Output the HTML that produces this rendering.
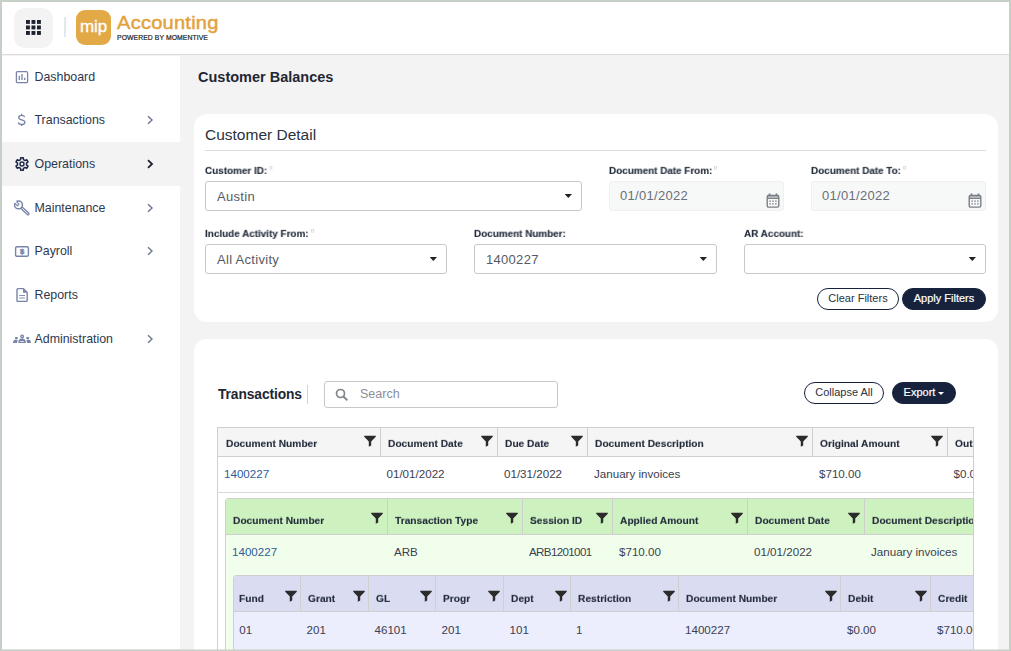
<!DOCTYPE html>
<html lang="en">
<head>
<meta charset="utf-8">
<title>Customer Balances</title>
<style>
*{box-sizing:border-box;margin:0;padding:0}
html,body{width:1011px;height:651px;overflow:hidden;background:#c7cfc9;font-family:"Liberation Sans",sans-serif;color:#222b3a}
#app{position:absolute;left:2px;top:2px;width:1007px;height:648px;background:#f3f3f3;overflow:hidden}
#hdr{position:absolute;left:0;top:0;width:1007px;height:53px;background:#fff;border-bottom:1px solid #dcdcdc}
#gridbtn{position:absolute;left:12px;top:6px;width:39px;height:40px;border-radius:11px;background:#f3f3f3}
#gridbtn svg{position:absolute;left:12px;top:12px}
#hdiv{position:absolute;left:62px;top:15px;width:2px;height:20px;background:#e4e8ee}
#mip{position:absolute;left:74px;top:8px;width:35px;height:35px;border-radius:9px;background:#e3a947;color:#fff;font-size:17px;line-height:33px;text-align:center;letter-spacing:-0.2px;-webkit-text-stroke:0.3px #fff}
#acct{position:absolute;left:115px;top:9px;font-size:17.8px;line-height:24px;color:#e3a23c;letter-spacing:0.2px;-webkit-text-stroke:0.45px #e3a23c;transform:scaleX(1.13);transform-origin:0 0;white-space:nowrap}
#pow{position:absolute;left:115px;top:31px;font-size:6.8px;line-height:9px;color:#222;letter-spacing:0.1px;-webkit-text-stroke:0.2px #222;white-space:nowrap}
#side{position:absolute;left:0;top:54px;width:178px;height:593px;background:#fff}
.nav{position:absolute;left:0;width:178px;height:44px;font-size:12.4px;line-height:44px;color:#2d3850}
.nav.on{background:none}
#navhl{position:absolute;left:0;top:86px;width:178px;height:44px;background:#f3f3f3}
.nav span{position:absolute;left:32.5px;top:-1px}
.nav svg.ic{position:absolute}
.nav svg.ch{position:absolute;left:144px;top:16px}
#main{position:absolute;left:178px;top:54px;width:829px;height:593px}
h1{position:absolute;left:18px;top:11px;font-size:14.5px;line-height:20px;font-weight:bold;color:#1f2633}
.card{position:absolute;left:14px;width:804px;background:#fff;border-radius:13px}
.ttl{position:absolute;left:11px;top:10.9px;font-size:14.7px;line-height:20px;color:#2a3140;transform:scaleX(1.055);transform-origin:0 0;white-space:nowrap}
.hr{position:absolute;left:11px;top:36px;width:781px;height:1px;background:#dcdcdc}
.lbl{position:absolute;font-size:10px;line-height:14px;margin:0;font-weight:bold;color:#222b3a;white-space:nowrap;-webkit-text-stroke:0.1px #222b3a;transform:scale(0.99,0.9);transform-origin:0 10.3px;will-change:transform}
.lbl i{display:inline-block;width:3px;height:4px;border:1px solid #dcdcdc;position:relative;top:-5px;left:2px}
.inp{position:absolute;height:30px;border:1px solid #c8c8c8;border-radius:3px;background:#fff;font-size:13px;line-height:29px;color:#555b66;padding-left:11px;letter-spacing:0.3px}
.inp.dis{background:#f7f8f8;border-color:#efefef;color:#6a6f78;line-height:27px;padding-left:10px}
.inp b{position:absolute;right:9px;top:12px;width:7.4px;height:4px;background:#222;clip-path:polygon(0 0,100% 0,50% 100%)}
.inp svg{position:absolute;right:3px;top:10.5px}
.btn{position:absolute;height:22px;border-radius:11px;border:1px solid #17233d;font-size:11px;line-height:19px;text-align:center;color:#2a3140;background:#fff;white-space:nowrap}
.btn.pri{background:#17233d;color:#fff;-webkit-text-stroke:0.2px #fff}
#tt{position:absolute;font-size:13.8px;line-height:20px;font-weight:bold;color:#1f2633;letter-spacing:-0.1px}
#tdv{position:absolute;width:1px;height:19px;background:#d4d4d4}
#srch{position:absolute;border:1px solid #c8c8c8;border-radius:3px;font-size:12.5px;line-height:25px;color:#8a8f98;padding-left:35px}
#srch svg{position:absolute;left:10px;top:6px}
.abs{position:absolute}
.th{position:absolute;font-size:10px;font-weight:bold;color:#222b3a;white-space:nowrap;line-height:12px;margin-top:0.1px;-webkit-text-stroke:0.1px #222b3a;transform:scale(1.02,0.9);transform-origin:0 9.3px;will-change:transform}
.td{position:absolute;font-size:11.6px;line-height:14px;color:#3a4150;white-space:nowrap}
.td.lk{color:#2c5c9a}
.vl{position:absolute;width:1px;background:#cfcfcf}
.hl{position:absolute;height:1px;background:#cfcfcf}
svg.f{position:absolute}
</style>
</head>
<body>
<div id="app">
<div id="hdr">
<div id="gridbtn"><svg width="15" height="15" viewBox="0 0 15 15"><g fill="#1e2230"><rect x="0" y="0" width="3.9" height="3.9"/><rect x="5.5" y="0" width="3.9" height="3.9"/><rect x="11" y="0" width="3.9" height="3.9"/><rect x="0" y="5.5" width="3.9" height="3.9"/><rect x="5.5" y="5.5" width="3.9" height="3.9"/><rect x="11" y="5.5" width="3.9" height="3.9"/><rect x="0" y="11" width="3.9" height="3.9"/><rect x="5.5" y="11" width="3.9" height="3.9"/><rect x="11" y="11" width="3.9" height="3.9"/></g></svg></div>
<div id="hdiv"></div><div id="mip">mip</div><div id="acct">Accounting</div><div id="pow">POWERED BY MOMENTIVE</div></div>
<div id="side"><div id="navhl"></div>
<div class="nav" style="top:0px"><svg class="ic" style="left:13px;top:14px" width="14" height="14" viewBox="0 0 14 14"><rect x="1.4" y="1.6" width="11.2" height="11" rx="1.2" fill="none" stroke="#7884a8" stroke-width="1.3"/><path d="M4.3 5.8V10 M7 3.9V10 M9.7 7.8V10" stroke="#7884a8" stroke-width="1.3" fill="none"/></svg><span>Dashboard</span></div>
<div class="nav" style="top:43px"><svg class="ic" style="left:14px;top:13px" width="11" height="16" viewBox="0 0 11 16"><path d="M8.6 5.2C8.3 3.9 7.1 3.3 5.6 3.3C3.9 3.3 2.7 4.2 2.7 5.5C2.7 8.6 8.9 7 8.9 10.2C8.9 11.6 7.5 12.5 5.7 12.5C3.9 12.5 2.6 11.7 2.3 10.3 M5.6 1.8V3.3 M5.6 12.5V14" fill="none" stroke="#7884a8" stroke-width="1.3"/></svg><span>Transactions</span><svg class="ch" width="8" height="10" viewBox="0 0 8 10"><path d="M2 1.2L6 5L2 8.8" fill="none" stroke="#6b7690" stroke-width="1.4"/></svg></div>
<div class="nav on" style="top:87px"><svg class="ic" style="left:12px;top:13px" width="16" height="16" viewBox="0 0 16 16"><path d="M6.53 3.64 L6.80 1.71 L9.20 1.71 L9.47 3.64 L11.04 4.55 L12.84 3.82 L14.04 5.90 L12.51 7.09 L12.51 8.91 L14.04 10.10 L12.84 12.18 L11.04 11.45 L9.47 12.36 L9.20 14.29 L6.80 14.29 L6.53 12.36 L4.96 11.45 L3.16 12.18 L1.96 10.10 L3.49 8.91 L3.49 7.09 L1.96 5.90 L3.16 3.82 L4.96 4.55Z" fill="none" stroke="#1c2745" stroke-width="1.5" stroke-linejoin="round"/><circle cx="8" cy="8" r="2" fill="none" stroke="#1c2745" stroke-width="1.4"/></svg><span>Operations</span><svg class="ch" width="8" height="10" viewBox="0 0 8 10"><path d="M2 1.2L6 5L2 8.8" fill="none" stroke="#1e2230" stroke-width="1.8"/></svg></div>
<div class="nav" style="top:131px"><svg class="ic" style="left:11px;top:13px" width="18" height="18" viewBox="0 0 18 18"><path d="M8.4 7.6L15 13.8" stroke="#7884a8" stroke-width="3.3" stroke-linecap="round" fill="none"/><path d="M8.6 7.8L14.9 13.7" stroke="#fff" stroke-width="0.9" stroke-linecap="round" fill="none"/><circle cx="5.5" cy="4.9" r="3.9" fill="#fff" stroke="#7884a8" stroke-width="1.5"/><path d="M1.6 1.2L5.6 5.2" stroke="#fff" stroke-width="2.4" fill="none"/><path d="M3.4 1.6L6 4.2L4.6 5.8L1.9 3.2" fill="none" stroke="#7884a8" stroke-width="1.1" stroke-linejoin="round"/></svg><span>Maintenance</span><svg class="ch" width="8" height="10" viewBox="0 0 8 10"><path d="M2 1.2L6 5L2 8.8" fill="none" stroke="#6b7690" stroke-width="1.4"/></svg></div>
<div class="nav" style="top:174px"><svg class="ic" style="left:12px;top:15px" width="16" height="13" viewBox="0 0 16 13"><rect x="1.6" y="1.7" width="12.8" height="9.6" rx="1.4" fill="none" stroke="#7884a8" stroke-width="1.4"/><text x="8" y="9.4" font-family="Liberation Sans, sans-serif" font-size="7.5" font-weight="bold" fill="#7884a8" stroke="#7884a8" stroke-width="0.5" text-anchor="middle">$</text></svg><span>Payroll</span><svg class="ch" width="8" height="10" viewBox="0 0 8 10"><path d="M2 1.2L6 5L2 8.8" fill="none" stroke="#6b7690" stroke-width="1.4"/></svg></div>
<div class="nav" style="top:218px"><svg class="ic" style="left:13px;top:13px" width="14" height="16" viewBox="0 0 14 16"><path d="M2 2.6Q2 1.6 3 1.6H8.2L12.2 5.6V13.4Q12.2 14.4 11.2 14.4H3Q2 14.4 2 13.4Z" fill="none" stroke="#7884a8" stroke-width="1.4" stroke-linejoin="round"/><path d="M8 1.6V5.8H12.2Z" fill="#7884a8"/><path d="M4.2 8.5H10 M4.2 11H10" stroke="#7884a8" stroke-width="0.9"/></svg><span>Reports</span></div>
<div class="nav" style="top:262px"><svg class="ic" style="left:10px;top:15px" width="20" height="12" viewBox="0 0 20 12"><circle cx="10.1" cy="3.5" r="1.35" fill="#dfe3ee" stroke="#7884a8" stroke-width="1.3"/><path d="M6.3 9.9Q6.3 5.6 10.1 5.6Q13.9 5.6 13.9 9.9Z" fill="#7884a8"/><rect x="8" y="7.9" width="4.2" height="0.8" rx="0.4" fill="#fff"/><rect x="2.9" y="4" width="3" height="2" rx="0.8" fill="#7884a8"/><rect x="14.2" y="4" width="3" height="2" rx="0.8" fill="#7884a8"/><path d="M1.1 9.9Q1.3 6.6 4.2 6.6Q5.2 6.6 5.7 7.2Q5.1 8.4 5.1 9.9Z" fill="#7884a8"/><path d="M19 9.9Q18.8 6.6 15.9 6.6Q14.9 6.6 14.4 7.2Q15 8.4 15 9.9Z" fill="#7884a8"/></svg><span>Administration</span><svg class="ch" width="8" height="10" viewBox="0 0 8 10"><path d="M2 1.2L6 5L2 8.8" fill="none" stroke="#6b7690" stroke-width="1.4"/></svg></div>
</div>
<div id="main"><h1>Customer Balances</h1>
<div class="card" id="c1" style="top:58px;height:208px">
<div class="ttl">Customer Detail</div><div class="hr"></div>
<div class="lbl" style="left:11px;top:50px">Customer ID:<i></i></div>
<div class="inp" style="left:11px;top:67px;width:377px">Austin<b></b></div>
<div class="lbl" style="left:415px;top:50px">Document Date From:<i></i></div>
<div class="inp dis" style="left:415px;top:67px;width:175px">01/01/2022<svg width="14" height="15" viewBox="0 0 14 15"><rect x="1.2" y="2.5" width="11.6" height="11.6" rx="1.4" fill="none" stroke="#7a7f85" stroke-width="1.4"/><path d="M1.2 2.6h11.6v1H1.2z M1.2 4.5h11.6v1.5H1.2z M2.6 0.4h1.8v2.4H2.6z M9.6 0.4h1.8v2.4H9.6z" fill="#7a7f85"/><g fill="#6a6f75"><rect x="3.3" y="7.6" width="1.7" height="1"/><rect x="6.15" y="7.6" width="1.7" height="1"/><rect x="9" y="7.6" width="1.7" height="1"/><rect x="3.3" y="10.4" width="1.7" height="1"/><rect x="6.15" y="10.4" width="1.7" height="1"/><rect x="9" y="10.4" width="1.7" height="1"/></g></svg></div>
<div class="lbl" style="left:617px;top:50px">Document Date To:<i></i></div>
<div class="inp dis" style="left:617px;top:67px;width:175px">01/01/2022<svg width="14" height="15" viewBox="0 0 14 15"><rect x="1.2" y="2.5" width="11.6" height="11.6" rx="1.4" fill="none" stroke="#7a7f85" stroke-width="1.4"/><path d="M1.2 2.6h11.6v1H1.2z M1.2 4.5h11.6v1.5H1.2z M2.6 0.4h1.8v2.4H2.6z M9.6 0.4h1.8v2.4H9.6z" fill="#7a7f85"/><g fill="#6a6f75"><rect x="3.3" y="7.6" width="1.7" height="1"/><rect x="6.15" y="7.6" width="1.7" height="1"/><rect x="9" y="7.6" width="1.7" height="1"/><rect x="3.3" y="10.4" width="1.7" height="1"/><rect x="6.15" y="10.4" width="1.7" height="1"/><rect x="9" y="10.4" width="1.7" height="1"/></g></svg></div>
<div class="lbl" style="left:11px;top:113px">Include Activity From:<i></i></div>
<div class="inp" style="left:11px;top:130px;width:242px">All Activity<b></b></div>
<div class="lbl" style="left:280px;top:113px">Document Number:</div>
<div class="inp" style="left:280px;top:130px;width:243px">1400227<b></b></div>
<div class="lbl" style="left:550px;top:113px">AR Account:</div>
<div class="inp" style="left:550px;top:130px;width:242px"><b></b></div>
<div class="btn" style="left:623px;top:174px;width:82px">Clear Filters</div>
<div class="btn pri" style="left:708px;top:174px;width:84px">Apply Filters</div>
</div>
<div class="card" id="c2" style="top:283px;height:330px;border-bottom-left-radius:0;border-bottom-right-radius:0;overflow:hidden">
<div id="tt" style="left:24px;top:45.5px">Transactions</div>
<div id="tdv" style="left:113px;top:46px"></div>
<div id="srch" style="left:130px;top:42px;width:234px;height:27px"><svg width="14" height="14" viewBox="0 0 14 14"><circle cx="5.5" cy="5.5" r="4" fill="none" stroke="#808489" stroke-width="1.7"/><path d="M8.5 8.5L12.3 12.3" stroke="#808489" stroke-width="1.9"/></svg>Search</div>
<div class="btn" style="left:610px;top:43px;width:80px">Collapse All</div>
<div class="btn pri" style="left:698px;top:43px;width:64px">Export <span style="display:inline-block;width:0;height:0;border-left:3px solid transparent;border-right:3px solid transparent;border-top:3px solid #fff;vertical-align:1px"></span></div>
<div class="abs" style="left:23px;top:88px;width:757px;height:230px;overflow:hidden;background:#fff">
<div class="abs" style="left:0px;top:0px;width:983px;height:30px;background:#f5f5f5;"></div>
<div class="hl" style="left:0px;top:0px;width:983px;background:#cfcfcf"></div>
<div class="hl" style="left:0px;top:29px;width:983px;background:#cfcfcf"></div>
<div class="vl" style="left:0px;top:0px;height:273px;background:#cfcfcf"></div>
<div class="th" style="left:9px;top:11px">Document Number</div>
<div class="vl" style="left:163px;top:0px;height:30px;background:#cfcfcf"></div>
<div class="th" style="left:171px;top:11px">Document Date</div>
<svg class="f" style="left:147.39999999999998px;top:8px" width="12" height="12" viewBox="0 0 11 11"><path d="M0.2 0.6h10.6v0.9L6.6 6V9.6L4.4 10.8V6L0.2 1.5z" fill="#2b2b2b"/></svg>
<div class="vl" style="left:280px;top:0px;height:30px;background:#cfcfcf"></div>
<div class="th" style="left:288px;top:11px">Due Date</div>
<svg class="f" style="left:264.4px;top:8px" width="12" height="12" viewBox="0 0 11 11"><path d="M0.2 0.6h10.6v0.9L6.6 6V9.6L4.4 10.8V6L0.2 1.5z" fill="#2b2b2b"/></svg>
<div class="vl" style="left:370px;top:0px;height:30px;background:#cfcfcf"></div>
<div class="th" style="left:378px;top:11px">Document Description</div>
<svg class="f" style="left:354.4px;top:8px" width="12" height="12" viewBox="0 0 11 11"><path d="M0.2 0.6h10.6v0.9L6.6 6V9.6L4.4 10.8V6L0.2 1.5z" fill="#2b2b2b"/></svg>
<div class="vl" style="left:595px;top:0px;height:30px;background:#cfcfcf"></div>
<div class="th" style="left:603px;top:11px">Original Amount</div>
<svg class="f" style="left:579.4px;top:8px" width="12" height="12" viewBox="0 0 11 11"><path d="M0.2 0.6h10.6v0.9L6.6 6V9.6L4.4 10.8V6L0.2 1.5z" fill="#2b2b2b"/></svg>
<div class="vl" style="left:730px;top:0px;height:30px;background:#cfcfcf"></div>
<div class="th" style="left:738px;top:11px">Outstanding</div>
<svg class="f" style="left:714.4px;top:8px" width="12" height="12" viewBox="0 0 11 11"><path d="M0.2 0.6h10.6v0.9L6.6 6V9.6L4.4 10.8V6L0.2 1.5z" fill="#2b2b2b"/></svg>
<div class="td lk" style="left:7px;top:40px">1400227</div>
<div class="td" style="left:169.5px;top:40px">01/01/2022</div>
<div class="td" style="left:287px;top:40px">01/31/2022</div>
<div class="td" style="left:377px;top:40px">January invoices</div>
<div class="td" style="left:602px;top:40px">$710.00</div>
<div class="td" style="left:736.5px;top:40px">$0.00</div>
<div class="hl" style="left:0px;top:65px;width:983px;background:#d9d9d9"></div>
<div class="abs" style="left:8px;top:71px;width:1000px;height:300px;background:#f2feec;border:1px solid #cfcfcf;border-top-left-radius:3px"></div>
<div class="abs" style="left:9px;top:72px;width:1000px;height:35px;background:#cef1c0;border-top-left-radius:2px"></div>
<div class="hl" style="left:9px;top:107px;width:974px;background:#cfcfcf"></div>
<div class="th" style="left:16px;top:87.70000000000005px">Document Number</div>
<div class="vl" style="left:170px;top:71px;height:37px;background:#cfcfcf"></div>
<div class="th" style="left:178px;top:87.70000000000005px">Transaction Type</div>
<svg class="f" style="left:154.39999999999998px;top:84.5px" width="12" height="12" viewBox="0 0 11 11"><path d="M0.2 0.6h10.6v0.9L6.6 6V9.6L4.4 10.8V6L0.2 1.5z" fill="#2b2b2b"/></svg>
<div class="vl" style="left:305px;top:71px;height:37px;background:#cfcfcf"></div>
<div class="th" style="left:313px;top:87.70000000000005px">Session ID</div>
<svg class="f" style="left:289.4px;top:84.5px" width="12" height="12" viewBox="0 0 11 11"><path d="M0.2 0.6h10.6v0.9L6.6 6V9.6L4.4 10.8V6L0.2 1.5z" fill="#2b2b2b"/></svg>
<div class="vl" style="left:395px;top:71px;height:37px;background:#cfcfcf"></div>
<div class="th" style="left:403px;top:87.70000000000005px">Applied Amount</div>
<svg class="f" style="left:379.4px;top:84.5px" width="12" height="12" viewBox="0 0 11 11"><path d="M0.2 0.6h10.6v0.9L6.6 6V9.6L4.4 10.8V6L0.2 1.5z" fill="#2b2b2b"/></svg>
<div class="vl" style="left:530px;top:71px;height:37px;background:#cfcfcf"></div>
<div class="th" style="left:538px;top:87.70000000000005px">Document Date</div>
<svg class="f" style="left:514.4px;top:84.5px" width="12" height="12" viewBox="0 0 11 11"><path d="M0.2 0.6h10.6v0.9L6.6 6V9.6L4.4 10.8V6L0.2 1.5z" fill="#2b2b2b"/></svg>
<div class="vl" style="left:647px;top:71px;height:37px;background:#cfcfcf"></div>
<div class="th" style="left:655px;top:87.70000000000005px">Document Description</div>
<svg class="f" style="left:631.4px;top:84.5px" width="12" height="12" viewBox="0 0 11 11"><path d="M0.2 0.6h10.6v0.9L6.6 6V9.6L4.4 10.8V6L0.2 1.5z" fill="#2b2b2b"/></svg>
<div class="td lk" style="left:15px;top:118px">1400227</div>
<div class="td" style="left:177px;top:118px">ARB</div>
<div class="td" style="left:312px;top:118px"><span style="letter-spacing:-0.65px">ARB1201001</span></div>
<div class="td" style="left:402px;top:118px">$710.00</div>
<div class="td" style="left:537px;top:118px">01/01/2022</div>
<div class="td" style="left:654px;top:118px">January invoices</div>
<div class="abs" style="left:16px;top:148px;width:1000px;height:300px;background:#ecedfd;border:1px solid #cfcfcf;border-top-left-radius:3px"></div>
<div class="abs" style="left:17px;top:149px;width:1000px;height:35px;background:#dadcf2;border-top-left-radius:2px"></div>
<div class="hl" style="left:17px;top:184px;width:966px;background:#cfcfcf"></div>
<div class="th" style="left:22.30000000000001px;top:166px">Fund</div>
<div class="vl" style="left:83px;top:148px;height:37px;background:#cfcfcf"></div>
<div class="th" style="left:90.60000000000002px;top:166px">Grant</div>
<svg class="f" style="left:67.89999999999998px;top:163px" width="12" height="12" viewBox="0 0 11 11"><path d="M0.2 0.6h10.6v0.9L6.6 6V9.6L4.4 10.8V6L0.2 1.5z" fill="#2b2b2b"/></svg>
<div class="vl" style="left:151px;top:148px;height:37px;background:#cfcfcf"></div>
<div class="th" style="left:158.60000000000002px;top:166px">GL</div>
<svg class="f" style="left:135.89999999999998px;top:163px" width="12" height="12" viewBox="0 0 11 11"><path d="M0.2 0.6h10.6v0.9L6.6 6V9.6L4.4 10.8V6L0.2 1.5z" fill="#2b2b2b"/></svg>
<div class="vl" style="left:218px;top:148px;height:37px;background:#cfcfcf"></div>
<div class="th" style="left:225.60000000000002px;top:166px">Progr</div>
<svg class="f" style="left:202.89999999999998px;top:163px" width="12" height="12" viewBox="0 0 11 11"><path d="M0.2 0.6h10.6v0.9L6.6 6V9.6L4.4 10.8V6L0.2 1.5z" fill="#2b2b2b"/></svg>
<div class="vl" style="left:286px;top:148px;height:37px;background:#cfcfcf"></div>
<div class="th" style="left:293.6px;top:166px">Dept</div>
<svg class="f" style="left:270.9px;top:163px" width="12" height="12" viewBox="0 0 11 11"><path d="M0.2 0.6h10.6v0.9L6.6 6V9.6L4.4 10.8V6L0.2 1.5z" fill="#2b2b2b"/></svg>
<div class="vl" style="left:353px;top:148px;height:37px;background:#cfcfcf"></div>
<div class="th" style="left:360.6px;top:166px">Restriction</div>
<svg class="f" style="left:337.9px;top:163px" width="12" height="12" viewBox="0 0 11 11"><path d="M0.2 0.6h10.6v0.9L6.6 6V9.6L4.4 10.8V6L0.2 1.5z" fill="#2b2b2b"/></svg>
<div class="vl" style="left:461px;top:148px;height:37px;background:#cfcfcf"></div>
<div class="th" style="left:468.6px;top:166px">Document Number</div>
<svg class="f" style="left:445.9px;top:163px" width="12" height="12" viewBox="0 0 11 11"><path d="M0.2 0.6h10.6v0.9L6.6 6V9.6L4.4 10.8V6L0.2 1.5z" fill="#2b2b2b"/></svg>
<div class="vl" style="left:623px;top:148px;height:37px;background:#cfcfcf"></div>
<div class="th" style="left:630.6px;top:166px">Debit</div>
<svg class="f" style="left:607.9px;top:163px" width="12" height="12" viewBox="0 0 11 11"><path d="M0.2 0.6h10.6v0.9L6.6 6V9.6L4.4 10.8V6L0.2 1.5z" fill="#2b2b2b"/></svg>
<div class="vl" style="left:713px;top:148px;height:37px;background:#cfcfcf"></div>
<div class="th" style="left:720.6px;top:166px">Credit</div>
<svg class="f" style="left:697.9px;top:163px" width="12" height="12" viewBox="0 0 11 11"><path d="M0.2 0.6h10.6v0.9L6.6 6V9.6L4.4 10.8V6L0.2 1.5z" fill="#2b2b2b"/></svg>
<div class="td" style="left:22.30000000000001px;top:196px">01</div>
<div class="td" style="left:89.5px;top:196px">201</div>
<div class="td" style="left:157.5px;top:196px">46101</div>
<div class="td" style="left:224.5px;top:196px">201</div>
<div class="td" style="left:292.5px;top:196px">101</div>
<div class="td" style="left:359px;top:196px">1</div>
<div class="td" style="left:468px;top:196px">1400227</div>
<div class="td" style="left:630px;top:196px">$0.00</div>
<div class="td" style="left:720px;top:196px">$710.00</div>
<div class="vl" style="left:756px;top:0px;height:273px;background:#cfcfcf"></div>
</div>
</div>
</div>
<div class="abs" style="left:0;top:647px;width:1007px;height:1px;background:rgba(199,207,201,0.5)"></div>
</div>
</body>
</html>
